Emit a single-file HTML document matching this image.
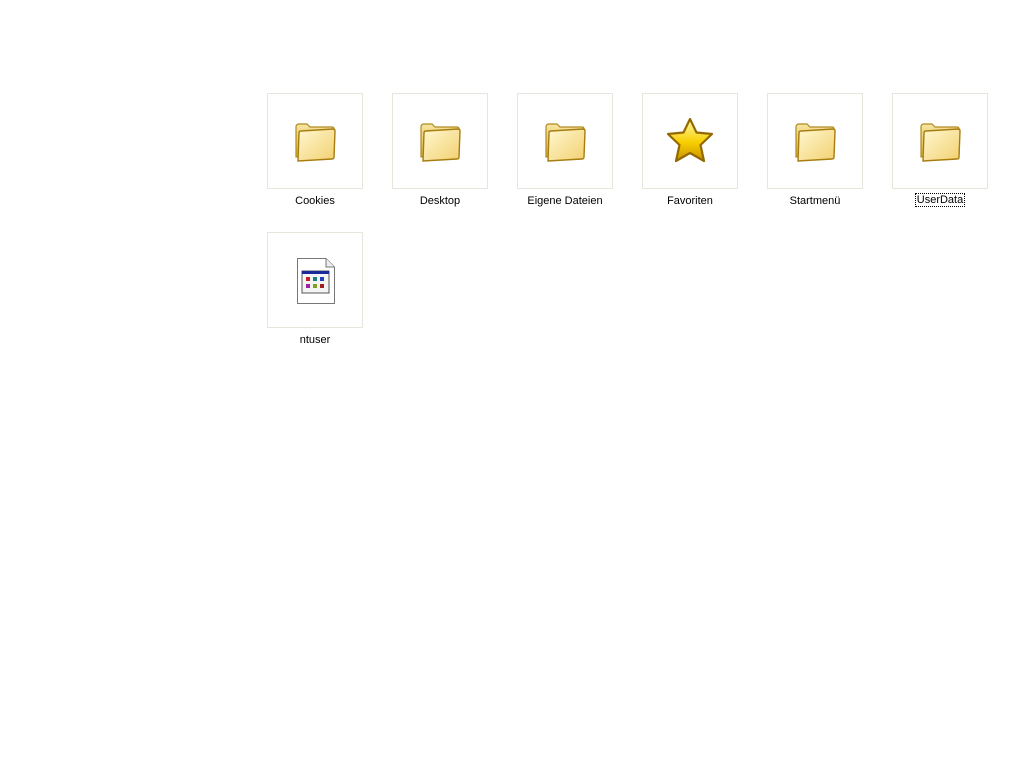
<!DOCTYPE html>
<html><head><meta charset="utf-8"><style>
body{margin:0;width:1024px;height:768px;background:#fff;position:relative;overflow:hidden;font-family:"Liberation Sans",Tahoma,sans-serif;font-size:11px;color:#000}
.b{position:absolute;width:94px;height:94px;border:1px solid #e8e6dc;background:#fff}
.b svg{position:absolute;left:23px;top:25px}
.l{position:absolute;width:126px;text-align:center;line-height:13px}
.sel{border:1px dotted #000;padding:0 1px}
</style></head><body>
<svg width="0" height="0" style="position:absolute"><defs>
<linearGradient id="fb" x1="0" y1="0" x2="0" y2="1"><stop offset="0" stop-color="#f7e6a0"/><stop offset="1" stop-color="#d9b040"/></linearGradient>
<linearGradient id="ff" x1="0" y1="0" x2="1" y2="1"><stop offset="0" stop-color="#fff8d0"/><stop offset="1" stop-color="#f2d070"/></linearGradient>
<linearGradient id="st" x1="0" y1="0" x2="0" y2="1"><stop offset="0" stop-color="#fff8b0"/><stop offset="0.55" stop-color="#f8d000"/><stop offset="1" stop-color="#c89000"/></linearGradient>
<symbol id="fold" viewBox="0 0 50 45">
<path d="M5,38 L5,8 Q5,5 8,5 L16,5 L19,8 L41,8 Q43,8 43,10 L43,34 Z" fill="url(#fb)" stroke="#b08a20" stroke-width="1.2"/>
<path d="M7,42 L8,14 Q8,12 10,12 L42,10 Q44,10 44,12 L43,38 Q43,40 41,40 Z" fill="url(#ff)" stroke="#a87d10" stroke-width="1.4"/>
</symbol>
</defs></svg>

<div class="b" style="left:267px;top:93px"><svg width="50" height="45"><use href="#fold"/></svg></div>
<div class="l" style="left:252px;top:195px">Cookies</div>
<div class="b" style="left:392px;top:93px"><svg width="50" height="45"><use href="#fold"/></svg></div>
<div class="l" style="left:377px;top:195px">Desktop</div>
<div class="b" style="left:517px;top:93px"><svg width="50" height="45"><use href="#fold"/></svg></div>
<div class="l" style="left:502px;top:195px">Eigene Dateien</div>
<div class="b" style="left:642px;top:93px"><svg width="50" height="50" style="left:22px;top:22px" viewBox="0 0 50 50"><path d="M25,3 L31.5,16.5 L47,18 L35.5,29 L39,45 L25,37 L11,45 L14.5,29 L3,18 L18.5,16.5 Z" fill="url(#st)" stroke="#946800" stroke-width="2.2" stroke-linejoin="round"/></svg></div>
<div class="l" style="left:627px;top:195px">Favoriten</div>
<div class="b" style="left:767px;top:93px"><svg width="50" height="45"><use href="#fold"/></svg></div>
<div class="l" style="left:752px;top:195px">Startmenü</div>
<div class="b" style="left:892px;top:93px"><svg width="50" height="45"><use href="#fold"/></svg></div>
<div class="l" style="left:877px;top:194px"><span class="sel">UserData</span></div>

<div class="b" style="left:267px;top:232px"><svg width="40" height="48" style="left:28px;top:24px" viewBox="0 0 40 48">
<path d="M1.5,1.5 L30,1.5 L38.5,10 L38.5,46.5 L1.5,46.5 Z" fill="#fff" stroke="#777"/>
<path d="M30,1.5 L30,10 L38.5,10" fill="#eee" stroke="#777"/>
<rect x="6" y="14" width="27" height="22" fill="#f4f4f4" stroke="#555"/>
<rect x="6" y="14" width="27" height="3" fill="#1a2a9a"/>
<rect x="10" y="20" width="4" height="4" fill="#c02020"/><rect x="17" y="20" width="4" height="4" fill="#208080"/><rect x="24" y="20" width="4" height="4" fill="#2040c0"/>
<rect x="10" y="27" width="4" height="4" fill="#a020a0"/><rect x="17" y="27" width="4" height="4" fill="#80a020"/><rect x="24" y="27" width="4" height="4" fill="#a02020"/>
</svg></div>
<div class="l" style="left:252px;top:334px">ntuser</div>
</body></html>
